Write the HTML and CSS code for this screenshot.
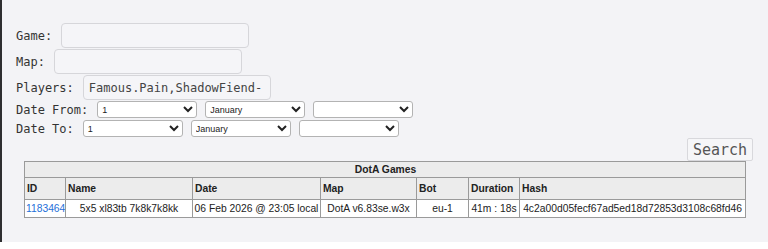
FILE: index.html
```html
<!DOCTYPE html>
<html>
  <head>
    <title>DotA Games</title>
    <link rel="stylesheet" href="styles.css">
  </head>
  <body>
    <div class="page">
      <form class="search-form">
        <div class="field">
          <label>Game:</label>
          <input type="text" class="text-input game-input">
        </div>
        <div class="field">
          <label>Map:</label>
          <input type="text" class="text-input">
        </div>
        <div class="field">
          <label>Players:</label>
          <input type="text" class="text-input" value="Famous.Pain,ShadowFiend-">
        </div>
        <div class="date-row">
          <label>Date From:</label>
          <select class="date-select"><option>1</option></select>
          <select class="date-select"><option>January</option></select>
          <select class="date-select"><option></option></select>
        </div>
        <div class="date-row">
          <label>Date To:</label>
          <select class="date-select"><option>1</option></select>
          <select class="date-select"><option>January</option></select>
          <select class="date-select"><option></option></select>
        </div>
        <div class="search-row">
          <button type="button" class="search-button">Search</button>
        </div>
      </form>

      <table class="games">
        <colgroup>
          <col class="col-id">
          <col class="col-name">
          <col class="col-date">
          <col class="col-map">
          <col class="col-bot">
          <col class="col-duration">
          <col class="col-hash">
        </colgroup>
        <tr class="title-row">
          <th colspan="7">DotA Games</th>
        </tr>
        <tr class="head-row">
          <th>ID</th>
          <th>Name</th>
          <th>Date</th>
          <th>Map</th>
          <th>Bot</th>
          <th>Duration</th>
          <th>Hash</th>
        </tr>
        <tr class="data-row">
          <td><a href="#">1183464</a></td>
          <td>5x5 xl83tb 7k8k7k8kk</td>
          <td>06 Feb 2026 @ 23:05 local</td>
          <td>DotA v6.83se.w3x</td>
          <td>eu-1</td>
          <td>41m : 18s</td>
          <td>4c2a00d05fecf67ad5ed18d72853d3108c68fd46</td>
        </tr>
      </table>
    </div>
  </body>
</html>
```

FILE: styles.css
```css
body {
  margin: 0;
  background-color: white;
}
.page {
  height: 242px;
  box-sizing: border-box;
  background-color: #f3f3f6;
  border-left: 2px solid #2e2e30;
  padding: 22px 0 0 14px;
  font-family: "DejaVu Sans Mono", monospace;
  font-size: 12px;
  color: #333;
}
.field {
  display: flex;
  align-items: center;
  height: 26px;
  padding-top: 1px;
  box-sizing: border-box;
}
.field label,
.date-row label {
  margin-right: 9px;
}
.text-input {
  width: 188px;
  height: 25px;
  box-sizing: border-box;
  border: 1px solid #d6d6da;
  border-radius: 4px;
  background-color: #f5f5f8;
  padding: 0 5px;
  font-family: "DejaVu Sans Mono", monospace;
  font-size: 12px;
  color: #444;
}
.date-row {
  display: flex;
  align-items: center;
  height: 19px;
}
.date-row:first-of-type {
  margin-top: 1px;
}
.date-select {
  width: 100px;
  height: 17px;
  margin-right: 8px;
  border: 1px solid #b3b3b3;
  border-radius: 3px;
  background-color: white;
  font-family: "Liberation Sans", Arial, sans-serif;
  font-size: 9px;
  color: #222;
}
.search-row {
  display: flex;
  justify-content: flex-end;
  padding-right: 15px;
}
.search-button {
  width: 66px;
  height: 23px;
  border: 1px solid #d8d8dc;
  border-radius: 2px;
  background-color: #f6f6f8;
  font-family: "DejaVu Sans Mono", monospace;
  font-size: 15px;
  color: #555;
  padding: 0;
}
.games {
  margin: 0 auto 0 8px;
  border-collapse: collapse;
  table-layout: fixed;
  width: 721px;
  font-family: "Liberation Sans", Arial, sans-serif;
  font-size: 10.3px;
  color: #222;
}
.col-id { width: 41px; }
.col-name { width: 127px; }
.col-date { width: 128px; }
.col-map { width: 96px; }
.col-bot { width: 52px; }
.col-duration { width: 51px; }
.col-hash { width: 226px; }
.games th,
.games td {
  border: 1px solid #9a9a9a;
  padding: 0 1px;
  white-space: nowrap;
  overflow: hidden;
}
.games th {
  background-color: #ececec;
  text-align: left;
  font-weight: bold;
  padding-left: 2px;
}
.title-row {
  height: 16px;
}
.title-row th {
  text-align: center;
}
.head-row {
  height: 22px;
}
.data-row {
  height: 18px;
  background-color: white;
}
.data-row td {
  text-align: center;
}
.games a {
  color: #1e6fd9;
  text-decoration: none;
}
```
